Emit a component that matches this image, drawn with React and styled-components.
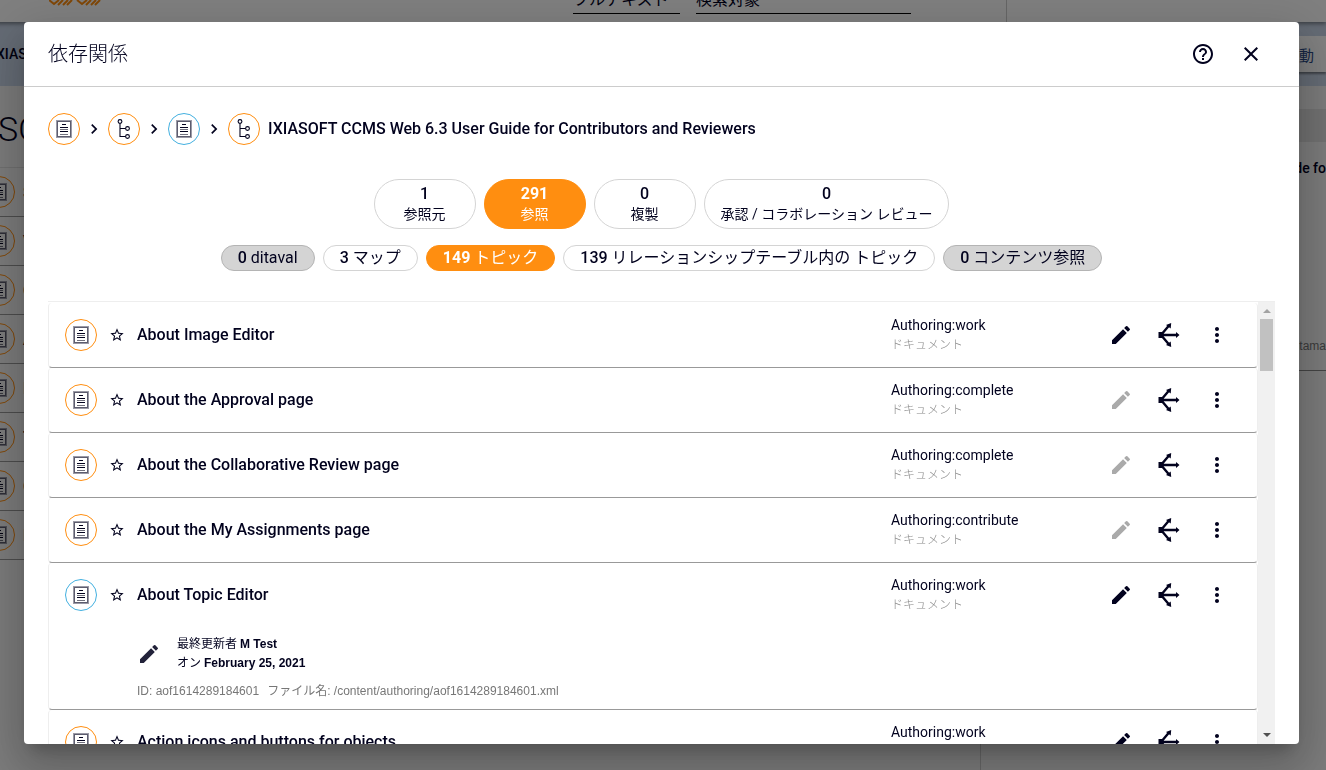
import styled, { createGlobalStyle } from 'styled-components';
import { MdHelpOutline, MdClose, MdEdit, MdMoreVert, MdStarBorder, MdChevronRight } from 'react-icons/md';

const GlobalStyle = createGlobalStyle`
  * {
    box-sizing: border-box;
  }
  body {
    margin: 0;
    overflow: hidden;
    background: #f5f5f5;
    color: #02021e;
    font-family: Roboto, "Noto Sans CJK JP", sans-serif;
    font-size: 16px;
  }
  button {
    font-family: inherit;
    color: inherit;
  }
`;

/* Page behind the dialog, scrolled a little to the side */
const Page = styled.div`
  margin-left: -33px;
  height: 100vh;
  display: flex;
  flex-direction: column;
  overflow: hidden;
`;

const TopBar = styled.header`
  flex: none;
  height: 22px;
  display: flex;
  align-items: flex-start;
  background: #fff;
  box-shadow: 0 2px 4px rgba(0, 0, 0, 0.4);
  z-index: 1;
`;

const Logo = styled.svg`
  display: block;
  margin-left: 82px;
`;

const SearchFields = styled.div`
  display: flex;
  gap: 16px;
  margin-left: auto;
  margin-right: 95px;
`;

const SearchField = styled.div`
  width: ${props => props.$wide ? '215px' : '107px'};
  height: 14px;
  display: flex;
  align-items: flex-end;
  justify-content: space-between;
  border-bottom: 1px solid #000;
  line-height: 26px;
  white-space: nowrap;
`;

const TopBarSide = styled.div`
  width: 320px;
  height: 22px;
  border-left: 1px solid #ccc;
`;

const ActionBar = styled.div`
  flex: none;
  height: 64px;
  display: flex;
  align-items: center;
  justify-content: space-between;
  padding-left: 29px;
  background: #c8d5e8;
  font-size: 14px;
  font-weight: 500;
`;

const MoveButton = styled.button`
  width: 58px;
  height: 36px;
  border: 0;
  background: #fff;
  color: #2a4a86;
  font-size: 15px;
  text-align: left;
  padding: 0 16px;
  white-space: nowrap;
  box-shadow: 0 2px 2px rgba(0, 0, 0, 0.4);
`;

const Columns = styled.div`
  flex: 1;
  display: flex;
`;

const MainColumn = styled.main`
  flex: 1;
  border-right: 1px solid #ccc;
`;

const PageTitle = styled.h1`
  margin: 0;
  height: 82px;
  padding-left: 31px;
  line-height: 86px;
  font-size: 34px;
  font-weight: 300;
  border-bottom: 1px solid #ddd;
`;

const PageRow = styled.div`
  height: 49px;
  display: flex;
  align-items: center;
  gap: 8px;
  padding-left: 16px;
  border-bottom: 1px solid #999;
  font-weight: 500;
`;

const SideColumn = styled.aside`
  width: 345px;
  padding-top: 23px;
`;

const SideCard = styled.section`
  height: 262px;
  border-bottom: 1px solid #888;
  text-align: right;
`;

const SideHeader = styled.div`
  height: 33px;
  background: #e0e0e0;
`;

const SideTitle = styled.div`
  margin-top: 16px;
  line-height: 20px;
  font-size: 14px;
  font-weight: 500;
`;

const SideNote = styled.div`
  margin-top: 158px;
  line-height: 20px;
  font-family: "Liberation Sans", sans-serif;
  font-size: 12px;
  color: #777;
`;

/* Dialog */
const Backdrop = styled.div`
  position: fixed;
  inset: 0;
  z-index: 10;
  display: flex;
  padding: 22px 27px 26px 24px;
  background: rgba(0, 0, 0, 0.5);
`;

const Dialog = styled.section`
  flex: 1;
  min-width: 0;
  display: flex;
  flex-direction: column;
  overflow: hidden;
  border-radius: 4px;
  background: #fff;
  box-shadow: 0 11px 15px -7px rgba(0, 0, 0, 0.2), 0 24px 38px 3px rgba(0, 0, 0, 0.14), 0 9px 46px 8px rgba(0, 0, 0, 0.12);
`;

const DialogHeader = styled.header`
  flex: none;
  height: 65px;
  display: flex;
  align-items: center;
  padding: 0 24px;
  border-bottom: 1px solid #ccc;
`;

const DialogTitle = styled.h2`
  flex: 1;
  margin: 0;
  padding-bottom: 4px;
  font-size: 20px;
  font-weight: 300;
`;

const IconButton = styled.button`
  width: 48px;
  height: 48px;
  display: flex;
  align-items: center;
  justify-content: center;
  padding: 0;
  border: 0;
  background: none;
  color: #02021e;
  cursor: pointer;
  &:disabled {
    color: #aaa;
    cursor: default;
  }
`;

const Breadcrumb = styled.nav`
  flex: none;
  display: flex;
  align-items: center;
  padding: 26px 24px 0;
`;

const Crumb = styled.a`
  display: flex;
  align-items: center;
  color: inherit;
`;

const Separator = styled(MdChevronRight)`
  width: 20px;
  height: 20px;
  margin: 0 4px;
`;

const CrumbTitle = styled.span`
  margin-left: 8px;
  padding-bottom: 2px;
  font-weight: 500;
`;

const Circle = styled.span`
  flex: none;
  width: 32px;
  height: 32px;
  display: flex;
  align-items: center;
  justify-content: center;
  border: 1px solid ${props => props.$blue ? '#43b0e0' : '#ff8e10'};
  border-radius: 50%;
`;

const Tabs = styled.div`
  flex: none;
  display: flex;
  justify-content: center;
  gap: 8px;
  margin-top: 34px;
`;

const Filters = styled(Tabs)`
  margin-top: 16px;
`;

const Pill = styled.button`
  border: 1px solid ${props => props.$active ? '#ff8e10' : '#d4d4d4'};
  background: ${props => props.$active ? '#ff8e10' : '#fff'};
  color: ${props => props.$active ? '#fff' : '#02021e'};
  padding: 0 16px;
  white-space: nowrap;
  cursor: pointer;
  b {
    font-size: 16px;
    font-weight: ${props => props.$active ? 700 : 500};
  }
`;

const Tab = styled(Pill)`
  min-width: 102px;
  height: 50px;
  display: flex;
  flex-direction: column;
  align-items: center;
  justify-content: center;
  border-radius: 25px;
  font-size: 14px;
  line-height: 20px;
`;

const Filter = styled(Pill)`
  height: 26px;
  border-radius: 13px;
  font-size: 16px;
  line-height: 24px;
  &:disabled {
    background: #d4d4d4;
    border-color: #b4b4b4;
    cursor: default;
  }
`;

const ListFrame = styled.div`
  flex: 1;
  min-height: 0;
  display: flex;
  margin: 30px 24px 0;
  border-top: 1px solid #eee;
`;

const List = styled.ul`
  flex: 1;
  min-width: 0;
  overflow: hidden;
  margin: 0;
  padding: 1px 0 0;
  list-style: none;
`;

const Row = styled.li`
  border: 1px solid #eee;
  border-top: 0;
  border-bottom-color: #999;
  border-radius: 4px;
`;

const RowMain = styled.div`
  height: 64px;
  display: flex;
  align-items: center;
  padding: 0 16px;
`;

const StarButton = styled(IconButton)`
  width: 40px;
  height: 40px;
`;

const RowTitle = styled.a`
  flex: 1;
  padding-bottom: 2px;
  color: inherit;
  font-weight: 500;
  text-decoration: none;
`;

const Status = styled.div`
  width: 206px;
  font-size: 14px;
  line-height: 20px;
`;

const Kind = styled.div`
  font-size: 12px;
  line-height: 20px;
  font-weight: 300;
  color: #888;
`;

const Details = styled.div`
  padding: 8px 16px 8px 88px;
  font-size: 12px;
`;

const Modified = styled.div`
  display: flex;
  align-items: center;
  gap: 16px;
  line-height: 19px;
  svg {
    color: #22223a;
  }
  b {
    font-family: "Liberation Sans", sans-serif;
  }
`;

const FileInfo = styled.div`
  display: flex;
  gap: 8px;
  margin-top: 8px;
  line-height: 20px;
  font-family: "Liberation Sans", "Noto Sans CJK JP", sans-serif;
  color: #777;
`;

const Scrollbar = styled.div`
  width: 17px;
  display: flex;
  flex-direction: column;
  align-items: center;
  background: #f1f1f1;
`;

const ScrollArrow = styled.svg`
  flex: none;
  display: block;
  width: 17px;
  height: 17px;
`;

const ScrollThumb = styled.div`
  width: 13px;
  height: 52px;
  margin-bottom: auto;
  background: #c1c1c1;
`;

const DocIcon = ({ blue }) => (
    <Circle $blue={blue}>
        <svg width="16" height="18" viewBox="0 0 16 18" fill="none">
            <rect x="0.5" y="0.5" width="15" height="17" stroke="#9a9aa6" />
            <rect x="1.5" y="1.5" width="13" height="15" stroke="#5c5c6e" />
            <path d="M6 4.500h4M4 7.500h8M4 11.500h8" stroke="#02021e" />
            <path d="M4 9.500h8M4 14.500h8" stroke="#72727f" />
        </svg>
    </Circle>
)

const MapIcon = () => (
    <Circle>
        <svg width="16" height="20" viewBox="0 0 16 20" fill="none" stroke="#02021e" strokeWidth="1.1">
            <circle cx="4" cy="2.5" r="1.9" />
            <circle cx="11.5" cy="9.5" r="1.9" />
            <circle cx="11.5" cy="17.5" r="1.9" />
            <path d="M4 4.500v13h5.500M4 9.500h5.500" />
        </svg>
    </Circle>
)

const BranchIcon = () => (
    <svg width="24" height="26" viewBox="0 0 24 26" fill="none" stroke="currentColor" strokeWidth="2.4">
        <path d="M3 13h17M4 13l8-9.500M4 13l8 9.500" />
        <path d="M1.500 10h4v6h-4zM19 10l3.500 3-3.500 3zM9 3l5.200-2-.5 5.500zM9 23l5.200 2-.5-5.500z" fill="currentColor" stroke="none" />
    </svg>
)

const crumbs = ['doc', 'map', 'docBlue', 'map'];

const tabs = [
    { count: 1, label: '参照元' },
    { count: 291, label: '参照', active: true },
    { count: 0, label: '複製' },
    { count: 0, label: '承認 / コラボレーション レビュー' },
];

const filters = [
    { count: 0, label: 'ditaval', disabled: true },
    { count: 3, label: 'マップ' },
    { count: 149, label: 'トピック', active: true },
    { count: 139, label: 'リレーションシップテーブル内の トピック' },
    { count: 0, label: 'コンテンツ参照', disabled: true },
];

const topics = [
    { title: 'About Image Editor', status: 'work' },
    { title: 'About the Approval page', status: 'complete' },
    { title: 'About the Collaborative Review page', status: 'complete' },
    { title: 'About the My Assignments page', status: 'contribute' },
    {
        title: 'About Topic Editor',
        status: 'work',
        blue: true,
        details: { user: 'M Test', date: 'February 25, 2021', id: 'aof1614289184601', file: '/content/authoring/aof1614289184601.xml' },
    },
    { title: 'Action icons and buttons for objects', status: 'work' },
];

const pageRows = ['S', 'V', 'C', 'A', 'I', 'T', 'C', 'I'];

const TopicRow = ({ topic }) => (
    <Row>
        <RowMain>
            <DocIcon blue={topic.blue} />
            <StarButton aria-label="お気に入り"><MdStarBorder size={16} /></StarButton>
            <RowTitle href="#">{topic.title}</RowTitle>
            <Status>
                Authoring:{topic.status}
                <Kind>ドキュメント</Kind>
            </Status>
            <IconButton aria-label="編集" disabled={topic.status !== 'work'}><MdEdit size={24} /></IconButton>
            <IconButton aria-label="依存関係"><BranchIcon /></IconButton>
            <IconButton aria-label="メニュー"><MdMoreVert size={24} /></IconButton>
        </RowMain>
        {topic.details && (
            <Details>
                <Modified>
                    <MdEdit size={24} />
                    <div>
                        <div>最終更新者 <b>{topic.details.user}</b></div>
                        <div>オン <b>{topic.details.date}</b></div>
                    </div>
                </Modified>
                <FileInfo>
                    <span>ID: {topic.details.id}</span>
                    <span>ファイル名: {topic.details.file}</span>
                </FileInfo>
            </Details>
        )}
    </Row>
)

const Background = () => (
    <Page aria-hidden="true">
        <TopBar>
            <Logo width="52" height="6" viewBox="0 0 52 6" fill="none" stroke="#ff8e10" strokeWidth="2">
                <path d="M0 0l5 4 5-4M9 5l5-5M14 5l5-5M18 5l5-5M28 0l5 4 5-4M37 5l5-5M42 5l5-5M46 5l5-5" />
            </Logo>
            <SearchFields>
                <SearchField>フルテキスト</SearchField>
                <SearchField $wide>検索対象</SearchField>
            </SearchFields>
            <TopBarSide />
        </TopBar>
        <ActionBar>
            <span>XIASOFT</span>
            <MoveButton tabIndex={-1}>移動</MoveButton>
        </ActionBar>
        <Columns>
            <MainColumn>
                <PageTitle>SOFT CCMS Web</PageTitle>
                {pageRows.map((title, i) => (
                    <PageRow key={i}><DocIcon />{title}</PageRow>
                ))}
            </MainColumn>
            <SideColumn>
                <SideCard>
                    <SideHeader />
                    <SideTitle>User Guide fo</SideTitle>
                    <SideNote>ditama</SideNote>
                </SideCard>
            </SideColumn>
        </Columns>
    </Page>
)

const App = () => {
    return (
        <>
            <GlobalStyle />
            <Background />
            <Backdrop>
                <Dialog role="dialog" aria-labelledby="dialog-title">
                    <DialogHeader>
                        <DialogTitle id="dialog-title">依存関係</DialogTitle>
                        <IconButton aria-label="ヘルプ"><MdHelpOutline size={24} /></IconButton>
                        <IconButton aria-label="閉じる"><MdClose size={24} /></IconButton>
                    </DialogHeader>
                    <Breadcrumb>
                        {crumbs.map((kind, i) => (
                            <Crumb href="#" key={i}>
                                {i > 0 && <Separator />}
                                {kind === 'map' ? <MapIcon /> : <DocIcon blue={kind === 'docBlue'} />}
                            </Crumb>
                        ))}
                        <CrumbTitle>IXIASOFT CCMS Web 6.3 User Guide for Contributors and Reviewers</CrumbTitle>
                    </Breadcrumb>
                    <Tabs>
                        {tabs.map(tab => (
                            <Tab key={tab.label} $active={tab.active}>
                                <b>{tab.count}</b>
                                <span>{tab.label}</span>
                            </Tab>
                        ))}
                    </Tabs>
                    <Filters>
                        {filters.map(filter => (
                            <Filter key={filter.label} $active={filter.active} disabled={filter.disabled}>
                                <b>{filter.count}</b> {filter.label}
                            </Filter>
                        ))}
                    </Filters>
                    <ListFrame>
                        <List>
                            {topics.map(topic => <TopicRow key={topic.title} topic={topic} />)}
                        </List>
                        <Scrollbar>
                            <ScrollArrow viewBox="0 0 17 17"><path d="M5 11h8l-4-4z" fill="#a3a3a3" /></ScrollArrow>
                            <ScrollThumb />
                            <ScrollArrow viewBox="0 0 17 17"><path d="M5 6h8l-4 4z" fill="#505050" /></ScrollArrow>
                        </Scrollbar>
                    </ListFrame>
                </Dialog>
            </Backdrop>
        </>
    )
}

export default App
